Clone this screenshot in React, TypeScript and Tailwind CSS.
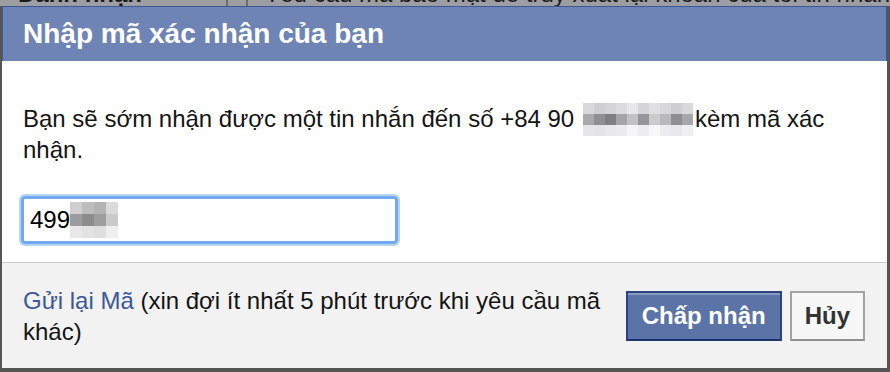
import React from "react";

const row1 = ["#d9d9dc", "#cfcfd2", "#d5d5d8", "#dcdcdf", "#e8e8ea", "#d6d6d9", "#e0e0e2", "#d8d8db", "#cfcfd2", "#d9d9dc"];
const row2 = ["#a9a9ad", "#8f8f94", "#7f7f85", "#a5a5a9", "#c2c2c5", "#96969a", "#cbcbce", "#b9b9bc", "#8e8e93", "#a7a7ab"];
const row3 = ["#e6e6e8", "#e4e4e6", "#e9e9eb", "#ececee", "#f5f5f6", "#ededef", "#f7f7f8", "#ececee", "#e8e8ea", "#efeff0"];

const inRows = [
  ["#cfcfcf", "#bdbdbd", "#b3b3b3", "#dadada"],
  ["#9c9c9c", "#8c8c8c", "#9e9e9e", "#cacaca"],
  ["#e8e8e8", "#e2e2e2", "#dedede", "#efefef"],
];

function Mosaic() {
  return (
    <span className="inline-grid grid-cols-[repeat(10,11px)] grid-rows-[repeat(3,11px)] align-top -mb-[2px] mx-[2px]">
      {[row1, row2, row3].flatMap((r, i) =>
        r.map((c, j) => <span key={`${i}-${j}`} className="block" style={{ backgroundColor: c }} />)
      )}
    </span>
  );
}

function InputMosaic() {
  return (
    <span className="grid grid-cols-[repeat(4,12px)] grid-rows-[repeat(3,12px)]">
      {inRows.flatMap((r, i) =>
        r.map((c, j) => <span key={`${i}-${j}`} className="block" style={{ backgroundColor: c }} />)
      )}
    </span>
  );
}

export default function App() {
  return (
    <div className="w-[890px] h-[372px] flex flex-col overflow-hidden bg-[#555555] font-['Liberation_Sans',Arial,sans-serif]">
      {/* page behind, seen through the frame */}
      <div className="h-[6px] shrink-0 overflow-hidden bg-[#9d9ea2] flex text-[24px] leading-[24px] text-[#1b1b1b] whitespace-nowrap">
        <div className="w-[227px] -mt-[18px] pl-[18px] font-bold">Danh nhận</div>
        <div className="w-[22px] border-x-2 border-[#6c6c6c] h-[6px]" />
        <div className="-mt-[18px] pl-[16px]">Yêu cầu mã bảo mật để truy xuất lại khoản của tôi tin nhắn</div>
      </div>
      <div className="flex-1 flex flex-col ml-[2px] mr-[3px] mb-[4px] min-h-0">
        <div className="h-[55px] shrink-0 bg-[#6d84b4] border-t border-x border-[#3b5998] flex items-center px-[20px] text-white font-bold text-[28px]">
          Nhập mã xác nhận của bạn
        </div>
        <div className="bg-white pt-[42px] pb-[18px] px-[21px] text-[#141414]">
          <p className="text-[24px] leading-[31px]">
            Bạn sẽ sớm nhận được một tin nhắn đến số +84 90 <Mosaic />kèm mã xác nhận.
          </p>
          <div className="mt-[31px] -ml-[2px] w-[377px] h-[48px] rounded-[4px] border-[3px] border-[#72a8ec] shadow-[0_0_0_2px_#b6d4f6] flex items-center pl-[6px] text-[24px] text-black">
            <span>499</span>
            <InputMosaic />
          </div>
        </div>
        <div className="flex-1 bg-[#f2f2f2] border-t border-[#cccccc] flex items-center pl-[21px] pr-[22px]">
          <p className="flex-1 text-[24px] leading-[31px] text-[#141414] pr-[20px]">
            <span className="text-[#3b5998]">Gửi lại Mã</span> (xin đợi ít nhất 5 phút trước khi yêu cầu mã khác)
          </p>
          <div className="flex gap-[8px] shrink-0">
            <button className="h-[50px] px-[14px] bg-[#5b74a8] border-2 border-[#29447e] border-b-[#1a356e] shadow-[inset_0_2px_0_#8a9cc2] text-white font-bold text-[24px]">
              Chấp nhận
            </button>
            <button className="h-[50px] px-[13px] bg-[#f7f7f7] border-2 border-[#a3a3a3] border-b-[#8f8f8f] text-[#333333] font-bold text-[24px]">
              Hủy
            </button>
          </div>
        </div>
      </div>
    </div>
  );
}
